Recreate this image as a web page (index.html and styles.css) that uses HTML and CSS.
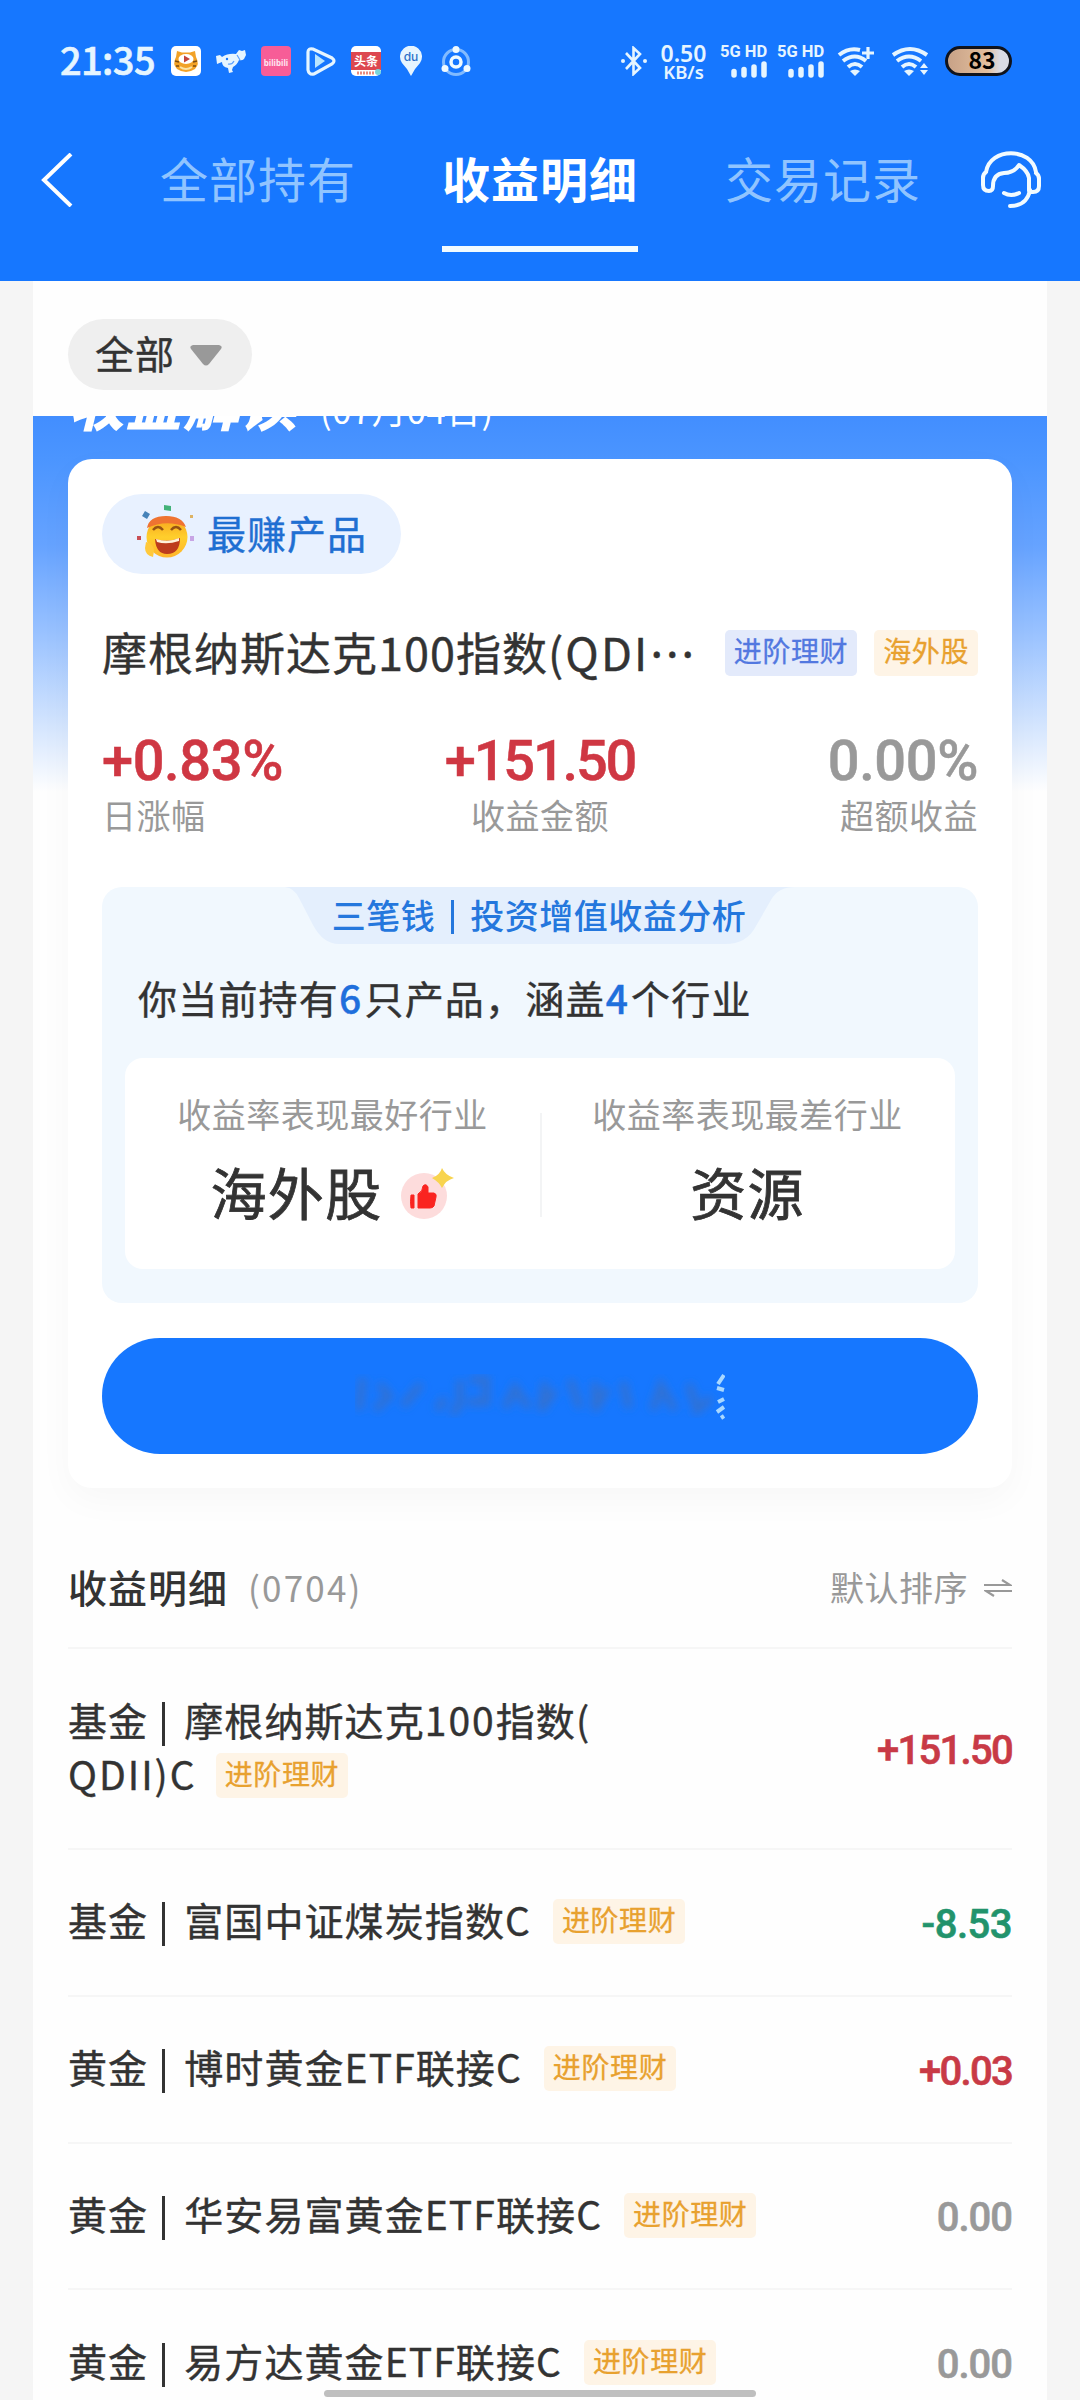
FILE: index.html
```html
<!DOCTYPE html>
<html lang="zh-CN">
<head>
<meta charset="utf-8">
<title>收益明细</title>
<link rel="stylesheet" href="styles.css">
</head>
<body>
<div class="screen">
  <header class="header">
    <div class="status">
      <span class="clock">21:35</span>
      <div class="apps">
        <svg class="app" viewBox="0 0 30 30"><rect width="30" height="30" rx="5" fill="#fff"/><path d="M6 5l5 1.500h8L24 5l1 6q4 7-1 12-9 6-18 0-5-5-1-12z" fill="#f2a227"/><path d="M4 15l4 1M26 15l-4 1M5 20l3 0M25 20l-3 0" stroke="#7a4a12" stroke-width="1.500"/><ellipse cx="15" cy="13" rx="7.500" ry="5" fill="#fff"/><path d="M13 9.500v7l6-3.500z" fill="#c3453c"/><path d="M9 21q6 4 12 0" stroke="#fbe3a5" stroke-width="2" fill="none"/></svg>
        <svg class="app" viewBox="0 0 30 30"><path d="M0 10l4-1 2 2q6-4 14-3l3-4 3 1 3-1 1 5-2 4q-2 2-5 1-2 5-6 7l-1 3 1 2-4 1-1-5q-6-1-6-6l-5 2z" fill="#e6f5ff"/><circle cx="11" cy="13" r="1.200" fill="#1677ff"/><path d="M12 18q4 1 6-3M21 9l3 5" stroke="#5ba1ff" stroke-width="1.200" fill="none"/></svg>
        <svg class="app" viewBox="0 0 30 30"><rect width="30" height="30" rx="4" fill="#f75d97"/><text x="15" y="20" class="bili">bilibili</text></svg>
        <svg class="app" viewBox="0 0 30 30"><path d="M2 6q0-4 5-3l19 9q4 3 0 6L8 28q-5 1-6-4z" fill="none" stroke="#e6f5ff" stroke-width="3.200"/><path d="M9 8v14l10-7z" fill="#b9e5ff"/></svg>
        <svg class="app" viewBox="0 0 30 30"><rect width="30" height="30" rx="5" fill="#fff"/><rect y="6" width="30" height="18" fill="#dd4850"/><text x="15" y="19.500" class="toutiao">头条</text><path d="M6 27h18" stroke="#e98b7f" stroke-width="3" stroke-dasharray="2 1"/><circle cx="27" cy="26" r="3" fill="#78d5dc"/></svg>
        <svg class="app" viewBox="0 0 30 30"><path d="M15 30Q11 22 6 17A11 11 0 1 1 24 17Q19 22 15 30z" fill="#e6f5ff"/><text x="15" y="15" class="du">du</text></svg>
        <svg class="app" viewBox="0 0 30 30"><circle cx="15" cy="16" r="12.500" fill="none" stroke="#82bbff" stroke-width="3"/><circle cx="15" cy="16" r="5" fill="none" stroke="#f0faff" stroke-width="3.500"/><circle cx="15" cy="3.500" r="3.500" fill="#f0faff"/><circle cx="4" cy="22.500" r="3.500" fill="#f0faff"/><circle cx="26" cy="22.500" r="3.500" fill="#f0faff"/></svg>
      </div>
      <div class="signals">
        <svg class="bt" viewBox="0 0 26 30"><path d="M5 7l14 15-6.500 6V2l6.500 6L5 23" fill="none" stroke="#e6f5ff" stroke-width="2.600"/><circle cx="2" cy="15" r="2" fill="#e6f5ff"/><circle cx="24" cy="15" r="2" fill="#e6f5ff"/></svg>
        <div class="speed"><span class="rate">0.50</span><span class="unit">KB/s</span></div>
        <div class="cell"><span>5G HD</span><svg viewBox="0 0 36 17"><path d="M3 10.500v3.500M13 8.500v5.500M23 6v8M33 3v11" stroke="#e6f5ff" stroke-width="5.500" stroke-linecap="round"/></svg></div>
        <div class="cell"><span>5G HD</span><svg viewBox="0 0 36 17"><path d="M3 10.500v3.500M13 8.500v5.500M23 6v8M33 3v11" stroke="#e6f5ff" stroke-width="5.500" stroke-linecap="round"/></svg></div>
        <svg class="wifi w1" viewBox="0 0 38 30"><path d="M2 9Q12 1 23 4M6 15q12-9 23 0M11 21q7-6 14 0" fill="none" stroke="#e6f5ff" stroke-width="4"/><path d="M13 25q5-3 10 0l-5 5z" fill="#e6f5ff"/><path d="M31 1v12M25 7h12" stroke="#e6f5ff" stroke-width="3.200"/></svg>
        <svg class="wifi w2" viewBox="0 0 38 30"><path d="M2 9q17-12 34 0M6 15q12-9 24 0M11 21q7-6 14 0" fill="none" stroke="#e6f5ff" stroke-width="4"/><path d="M13 25q5-3 10 0l-5 5z" fill="#e6f5ff"/><path d="M29 22l4-5 4 5zM29 24l4 5 4-5z" fill="#e6f5ff"/></svg>
        <div class="battery">83</div>
      </div>
    </div>
    <nav class="nav">
      <svg class="back" viewBox="0 0 32 54"><path d="M30 1L3 27l27 26" fill="none" stroke="#fff" stroke-width="4"/></svg>
      <a class="tab">全部持有</a>
      <a class="tab active">收益明细</a>
      <a class="tab">交易记录</a>
      <svg class="service" viewBox="0 0 60 58"><path d="M5 21C9-4 51-4 55 21M5 21q-3 2-3 6v7q0 6 6 6 4 0 4-5 0-12 11-13 10 0 15-8 9 6 10 13v13q0 1 4 1 6 0 6-6v-7q0-4-3-6M49 39q-3 16-20 16" fill="none" stroke="#f2fbff" stroke-width="4" stroke-linecap="round" stroke-linejoin="round"/><path d="M23 42q7 4 15 0" fill="none" stroke="#f2fbff" stroke-width="4" stroke-linecap="round"/></svg>
    </nav>
  </header>

  <main class="sheet">
    <div class="filter-bar">
      <button class="filter">全部<svg viewBox="0 0 34 24"><path d="M4 2h26q4 1 2 4L20 21q-3 3-6 0L2 6q-2-3 2-4z" fill="#999"/></svg></button>
    </div>

    <section class="hero">
      <div class="hero-title"><span class="hero-name">收益解读</span><span class="hero-date">(07月04日)</span></div>
      <article class="card">
        <div class="best">
          <svg viewBox="0 0 58 54"><defs><linearGradient id="face" x1="0" y1="0" x2="0" y2="1"><stop offset="0" stop-color="#f6a01c"/><stop offset=".5" stop-color="#ffcf2c"/><stop offset="1" stop-color="#ffb52a"/></linearGradient></defs><circle cx="30" cy="33" r="20.500" fill="url(#face)"/><path d="M10 24q2-12 19-12 16 0 20 11-20-8-39 1z" fill="#ef7331"/><path d="M16 26q5-6 10 0M34 26q5-6 10 0" fill="none" stroke="#965213" stroke-width="2.500"/><path d="M18 35q12 4 25-1 0 16-13 16-11 0-12-15z" fill="#bd3c1c"/><path d="M19 35q12 4 23-1v3q-12 4-22 1z" fill="#fff2d8"/><path d="M9 38q8 2 8 9l-1 6q-8-2-8-9z" fill="#ffc93b"/><path d="M27 1l7 1v5l-7-1z" fill="#43b279"/><path d="M8 7l5 3-3 5-5-3z" fill="#4683b9"/><path d="M0 32h4v4H0z" fill="#c84e55"/><path d="M53 32h4v5h-4z" fill="#c8a5e5"/><path d="M53 11h3v3h-3z" fill="#ddb365"/></svg>
          <span>最赚产品</span>
        </div>
        <div class="product">
          <h2>摩根纳斯达克100指数<span class="code">(QDI</span><span class="dots">...</span></h2>
          <span class="tag blue">进阶理财</span><span class="tag gold">海外股</span>
        </div>
        <div class="figures">
          <div><b class="up percent">+0.83%</b><span>日涨幅</span></div>
          <div><b class="up">+151.50</b><span>收益金额</span></div>
          <div><b class="percent">0.00%</b><span>超额收益</span></div>
        </div>
        <div class="analysis">
          <div class="ribbon">
            <svg viewBox="0 0 510 57" preserveAspectRatio="none"><path d="M0 0Q9 1 14 11L28 38Q38 57 54 57H440Q462 57 471 39L486 13Q493 0 510 0z" fill="#e4effd"/></svg>
            <span>三笔钱<i></i>投资增值收益分析</span>
          </div>
          <p>你当前持有<em>6</em>只产品，涵盖<em>4</em>个行业</p>
          <div class="sectors">
            <div class="sector"><span>收益率表现最好行业</span><strong>海外股<svg viewBox="0 0 54 54"><circle cx="24" cy="29" r="23" fill="#fddcdc"/><path d="M11 28h3v13h-3q-1-6 0-13M18 27q5-3 5-8 3-3 5 1v6h6q3 1 2 4l-2 9q-1 2-4 2H18z" fill="#fa2420" stroke="#fa2420" stroke-width="1"/><path d="M42 1q3 7 12 10-8 2-12 10-3-6-10-10 8-3 10-10z" fill="#f8d44f"/></svg></strong></div>
            <div class="sector"><span>收益率表现最差行业</span><strong>资源</strong></div>
          </div>
        </div>
        <button class="cta" aria-label="查看">
          <svg viewBox="0 0 370 60"><defs><filter id="soft"><feGaussianBlur stdDeviation="4"/></filter></defs><g filter="url(#soft)" fill="none" stroke="#3a6fc9" stroke-opacity=".8" stroke-width="8"><path d="M8 12l-4 32M24 18l10 12-14 14M48 40l18-22M82 44l8-12M105 14v24l-8 10M115 14h16v22h-18M150 42l10-20 14 20M190 16l-4 28 14-20M215 14l10 28M240 16v28l12-22M268 16l6 26M298 44l8-24 14 24M334 18l8 26 14-12"/></g><path d="M369 9l-6 9M362 22l7 2M369 33l-6 3M369 41l-7 5M369 50l-3 2" stroke="#a9d8ff" stroke-width="4"/></svg>
        </button>
      </article>
    </section>

    <section class="details">
      <div class="details-head">
        <h3>收益明细</h3><span class="day">(0704)</span>
        <span class="sort">默认排序<svg viewBox="0 0 28 18"><path d="M0 6h26L18 1M28 12H2l8 5" fill="none" stroke="#999" stroke-width="2.200"/></svg></span>
      </div>
      <div class="row tall"><div class="name">基金<i></i>摩根纳斯达克<span class="latin">100</span>指数(<br><span class="latin">QDII)C</span><span class="tag gold">进阶理财</span></div><b class="up">+151.50</b></div>
      <div class="row"><div class="name">基金<i></i>富国中证煤炭指数<span class="latin">C</span><span class="tag gold">进阶理财</span></div><b class="down">-8.53</b></div>
      <div class="row"><div class="name">黄金<i></i>博时黄金ETF联接<span class="latin">C</span><span class="tag gold">进阶理财</span></div><b class="up">+0.03</b></div>
      <div class="row"><div class="name">黄金<i></i>华安易富黄金ETF联接<span class="latin">C</span><span class="tag gold">进阶理财</span></div><b>0.00</b></div>
      <div class="row"><div class="name">黄金<i></i>易方达黄金ETF联接<span class="latin">C</span><span class="tag gold">进阶理财</span></div><b>0.00</b></div>
    </section>
  </main>
  <div class="home-bar"></div>
</div>
</body>
</html>
```
FILE: styles.css
```css
* { box-sizing: border-box; }
body { margin: 0; background: #f5f5f5; font-family: "Noto Sans CJK SC", sans-serif; color: #333; }
h2, h3, p { margin: 0; font-weight: 400; }
button { border: 0; padding: 0; font: inherit; color: inherit; }
svg { display: block; flex: none; }
i, em { font-style: normal; }
.screen { position: relative; width: 1080px; height: 2400px; overflow: hidden; }

/* Header */
.header { height: 281px; background: #1677ff; padding-top: 31px; }
.status { display: flex; align-items: center; height: 60px; padding: 0 68px 0 60px; color: #e6f5ff; }
.clock { width: 111px; font-size: 38px; line-height: 56px; font-weight: 500; letter-spacing: -.6px; padding-bottom: 4px; -webkit-text-stroke: .6px; }
.apps { display: flex; gap: 15px; }
.app { width: 30px; height: 30px; }
.app text { text-anchor: middle; }
.bili { font: 700 8px "Noto Sans", sans-serif; fill: #ffe5f0; }
.toutiao { font: 700 12px "Noto Sans CJK SC", sans-serif; fill: #fff; }
.du { font: 500 12px Inter, sans-serif; fill: #2d70c8; }
.signals { display: flex; align-items: center; margin-left: auto; }
.bt { width: 26px; height: 30px; margin-right: 12px; }
.speed { display: flex; flex-direction: column; align-items: center; width: 49px; margin-right: 12px; font-family: "Noto Sans", sans-serif; }
.rate { font-size: 23px; line-height: 20px; font-weight: 600; }
.unit { font-size: 18.500px; line-height: 17px; font-weight: 600; }
.cell { width: 47px; margin-right: 10px; font: 700 16.500px/14px Roboto, sans-serif; white-space: nowrap; }
.cell span { display: block; height: 16px; }
.cell svg { width: 36px; height: 17px; margin-left: 11px; }
.wifi { width: 38px; height: 30px; }
.w1 { margin: 0 16px 0 3px; }
.w2 { margin-right: 16px; }
.battery { width: 67px; height: 30px; border: 3px solid #10131c; border-radius: 15px; background: linear-gradient(90deg, #c8a287, #e3bf9e 65%, #d9dbe5 85%); color: #000; text-align: center; font-size: 23px; font-weight: 700; line-height: 20px; padding-left: 7px; }
.nav { display: flex; align-items: center; height: 178px; padding: 0 39px 0 41px; }
.back { width: 32px; height: 54px; }
.tab { width: 196px; height: 142px; margin-top: 19px; margin-left: 87px; padding-top: 32px; align-self: flex-start; text-align: center; font-size: 48px; line-height: 70px; letter-spacing: 1px; color: #90c4ff; white-space: nowrap; }
.tab.active { margin-left: 86px; color: #fff; font-weight: 700; background: linear-gradient(#f2fbff, #f2fbff) center bottom / 196px 6px no-repeat; }
.service { width: 60px; height: 58px; margin-left: auto; }

/* Filter */
.sheet { margin: 0 33px; height: 2119px; background: #fefefe; }
.filter-bar { height: 135px; padding: 38px 35px 0; }
.filter { display: flex; align-items: center; justify-content: center; gap: 14px; width: 184px; height: 71px; border-radius: 36px; background: #efefef; font-size: 39px; line-height: 67px; letter-spacing: 1px; -webkit-text-stroke: .4px; padding: 0 2px 4px 0; }
.filter svg { width: 34px; height: 24px; margin-top: 4px; }

/* Daily report card */
.hero { padding: 0 35px; background: linear-gradient(#428eff 0, #4b95ff 43px, #66a3ff 130px, #9bc3ff 220px, #d4e5fe 310px, #fefefe 376px) no-repeat; }
.hero-title { display: flex; align-items: flex-end; height: 43px; overflow: hidden; color: #fff; }
.hero-name { font-size: 56px; line-height: 56px; font-weight: 900; font-style: italic; letter-spacing: 1.500px; padding-bottom: 29px; }
.hero-date { font-size: 34.500px; line-height: 48px; padding-bottom: 26px; margin-left: 22px; letter-spacing: .6px; }
.card { height: 1029px; padding: 35px 34px 0; border-radius: 24px; background: #fff; box-shadow: 0 12px 36px rgba(0, 0, 0, .03); }
.best { display: flex; align-items: center; gap: 12px; width: 299px; height: 80px; padding: 0 0 4px 35px; border-radius: 40px; background: #e8f1ff; color: #1f6fd2; font-size: 39px; line-height: 72px; letter-spacing: 1px; -webkit-text-stroke: .4px; }
.best svg { width: 58px; height: 54px; margin-top: -2px; }
.product { display: flex; align-items: center; height: 70px; margin-top: 44px; }
.product h2 { display: flex; width: 623px; font-size: 45px; line-height: 64px; letter-spacing: 1px; white-space: nowrap; padding-bottom: 3px; -webkit-text-stroke: .4px; }
.code { letter-spacing: 2.200px; }
.dots { letter-spacing: 3px; margin: -14px 0 0 1px; }
.tag { display: inline-block; height: 46px; padding: 0 9px; border-radius: 5px; font-size: 28px; line-height: 41px; letter-spacing: .6px; white-space: nowrap; -webkit-text-stroke: .3px; }
.tag.blue { background: #e3eafb; color: #5278e0; }
.tag.gold { background: #fef4e6; color: #e8a12f; }
.product .gold { margin-left: 17px; }
.figures { display: flex; justify-content: space-between; margin-top: 40px; color: #999; }
.figures div { display: flex; flex-direction: column; width: 200px; }
.figures div:nth-child(2) { align-items: center; }
.figures div:nth-child(3) { align-items: flex-end; }
.figures b { font: 500 56px/66px Roboto, sans-serif; letter-spacing: -2.200px; -webkit-text-stroke: .5px; }
.figures b.percent { letter-spacing: -.4px; }
.figures span { margin-top: -3px; font-size: 34px; line-height: 47px; letter-spacing: .5px; }
.up { color: #cf3743; }
.down { color: #22936c; }
.analysis { height: 416px; margin-top: 49px; padding: 0 23px; border-radius: 20px; background: #f1f8fe; }
.ribbon { position: relative; width: 510px; height: 57px; margin: 0 auto; }
.ribbon svg { width: 510px; height: 57px; }
.ribbon span { position: absolute; inset: 0; display: flex; justify-content: center; align-items: center; font-size: 34px; line-height: 50px; letter-spacing: .5px; font-weight: 500; color: #2477dd; white-space: nowrap; padding: 0 2px 1px 0; }
.ribbon i { width: 3px; height: 34px; margin: 4px 16px 0; background: #2477dd; }
.analysis p { padding-left: 13px; height: 114px; line-height: 107px; font-size: 39px; letter-spacing: 1.200px; white-space: nowrap; -webkit-text-stroke: .4px; }
.analysis em { color: #1f6fdc; font-weight: 500; margin-right: 2px; }
.sectors { display: grid; grid-template-columns: 1fr 1fr; height: 211px; border-radius: 18px; background: #fff; }
.sector { display: flex; flex-direction: column; align-items: center; padding-top: 31px; }
.sector + .sector { background: linear-gradient(#f3f4f5, #f3f4f5) left 55px / 2px 104px no-repeat; }
.sector span { font-size: 34px; line-height: 50px; letter-spacing: .5px; color: #999; }
.sector strong { display: flex; align-items: center; margin-top: 13px; font-size: 56px; line-height: 78px; font-weight: 400; letter-spacing: 1.300px; -webkit-text-stroke: .8px; }
.sector svg { width: 54px; height: 54px; margin: 5px 0 0 18px; }
.cta { display: flex; justify-content: center; align-items: center; width: 100%; height: 116px; margin-top: 35px; border-radius: 58px; background: #1677ff; }
.cta svg { width: 370px; height: 60px; }

/* Detail list */
.details { padding: 0 35px; }
.details-head { display: flex; align-items: center; height: 161px; padding-top: 38px; border-bottom: 2px solid #f6f6f6; }
.details-head h3 { font-size: 39px; line-height: 56px; font-weight: 500; letter-spacing: 1px; padding-bottom: 2px; }
.day { margin-left: 20px; font-size: 35px; line-height: 50px; color: #999; letter-spacing: 2.200px; }
.sort { display: flex; align-items: center; gap: 16px; margin-left: auto; font-size: 34px; line-height: 50px; letter-spacing: .5px; color: #999; }
.sort svg { width: 28px; height: 18px; margin-top: 3px; }
.row { display: flex; justify-content: space-between; align-items: center; height: 146.800px; border-bottom: 2px solid #f6f6f6; }
.row.tall { height: 201px; }
.name { font-size: 39px; line-height: 54px; letter-spacing: 1.100px; white-space: nowrap; padding-bottom: 6px; -webkit-text-stroke: .4px; }
.name i { display: inline-block; width: 3px; height: 44px; margin: 0 19px 0 14px; background: #333; vertical-align: -10px; }
.latin { letter-spacing: 2px; }
.name .tag { margin-left: 21px; height: 45px; vertical-align: 5px; }
.row.tall .tag { margin-left: 19px; }
.row b { font: 500 40px/54px Roboto, sans-serif; letter-spacing: -1px; color: #999; padding-top: 5px; -webkit-text-stroke: .6px; }
.row b.up { color: #c83a46; letter-spacing: -1.700px; }
.row b.down { color: #22936c; letter-spacing: -.5px; }

.home-bar { position: absolute; left: 324px; top: 2390px; width: 432px; height: 7px; border-radius: 4px; background: #bfbfbf; }
```
